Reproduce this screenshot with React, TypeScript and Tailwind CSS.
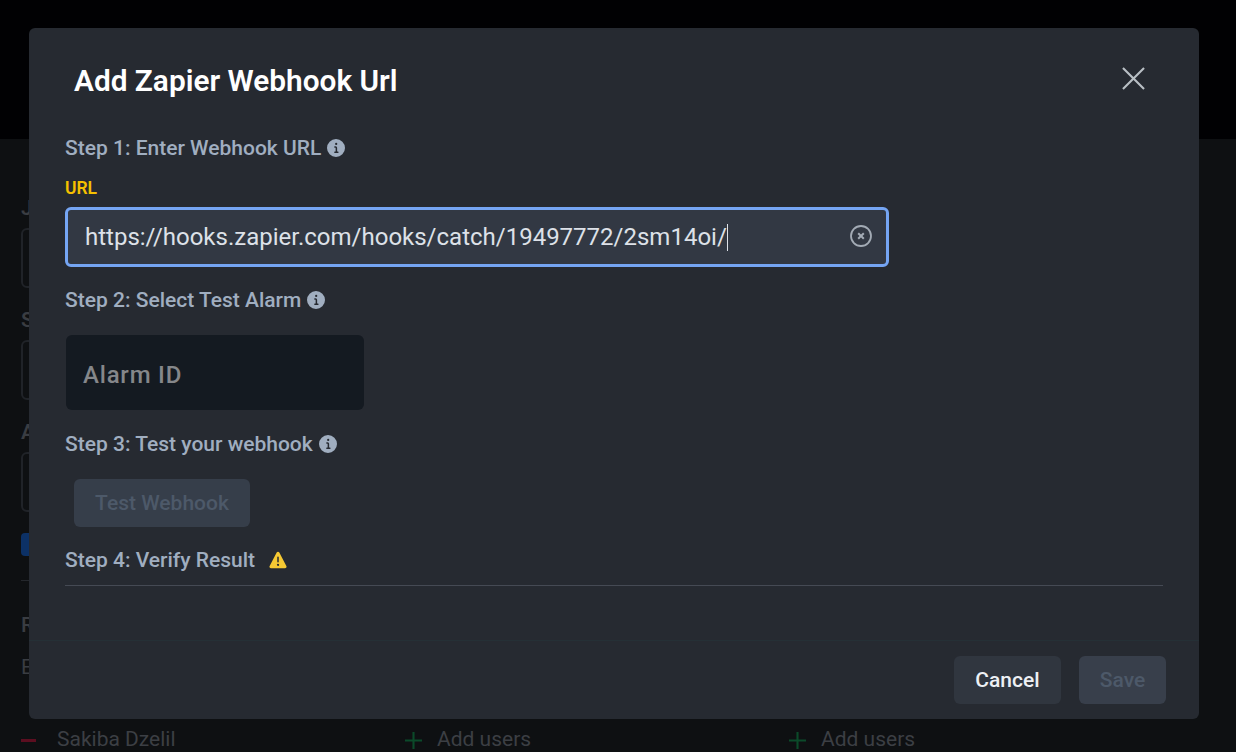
const INFO = "M12,0A12,12,0,1,0,24,12,12.013,12.013,0,0,0,12,0Zm.25,5a1.5,1.5,0,1,1-1.5,1.5A1.5,1.5,0,0,1,12.25,5ZM14.5,18.5h-4a1,1,0,0,1,0-2h.75a.25.25,0,0,0,.25-.25v-4.5a.25.25,0,0,0-.25-.25H10.5a1,1,0,0,1,0-2h1a2,2,0,0,1,2,2v4.75a.25.25,0,0,0,.25.25h.75a1,1,0,1,1,0,2Z";
const WARN = "M23.119,20,13.772,2.15h0a2,2,0,0,0-3.543,0L.881,20a2,2,0,0,0,1.772,2.928H21.347A2,2,0,0,0,23.119,20ZM11,8.423a1,1,0,0,1,2,0v6a1,1,0,1,1-2,0Zm1.05,11.51h-.028a1.528,1.528,0,0,1-1.522-1.47A1.476,1.476,0,0,1,11.948,16.9h.028A1.527,1.527,0,0,1,13.5,18.371,1.475,1.475,0,0,1,12.05,19.933Z";

function Info() {
  return (
    <svg viewBox="0 0 24 24" className="w-[18px] h-[18px] ml-[6px] shrink-0 text-[#a0aec0]" fill="currentColor">
      <path d={INFO} />
    </svg>
  );
}

function Step({ children }: { children: React.ReactNode }) {
  return (
    <div className="flex items-center h-[24px] text-[21px] leading-[24px] font-medium text-[#a0aec0]">
      {children}
    </div>
  );
}

function BgField({ letter, mt }: { letter: string; mt: string }) {
  return (
    <div className={mt}>
      <div className="text-[21px] leading-[24px] font-semibold text-[#3a3d42]">{letter}</div>
      <div className="mt-[8px] h-[60px] w-[200px] rounded-[6px] border-2 border-[#202328]" />
    </div>
  );
}

export default function App() {
  return (
    <div className="relative w-[1236px] h-[752px] overflow-hidden bg-[#0e1012] font-['Roboto',sans-serif]">
      <div className="h-[139px] bg-[#010103]" />
      <div className="pl-[21px]">
        <BgField letter="J" mt="mt-[57px]" />
        <BgField letter="S" mt="mt-[20px]" />
        <BgField letter="A" mt="mt-[20px]" />
        <div className="mt-[21px] w-[24px] h-[23px] rounded-[4px] bg-[#0c3166]" />
        <div className="mt-[24px] h-px w-[200px] bg-[#24272c]" />
        <div className="mt-[32px] text-[21px] leading-[24px] font-medium text-[#3a3d42]">R</div>
        <div className="mt-[18px] text-[21px] leading-[24px] text-[#3a3d42]">E</div>
        <div className="mt-[49px] flex items-center h-[24px] text-[21px] text-[#3c3f44]">
          <div className="w-[15px] h-[3px] bg-[#5c0e20]" />
          <span className="ml-[21px] w-[348px]">Sakiba Dzelil</span>
          <svg viewBox="0 0 16 16" className="w-[17px] h-[17px] text-[#0b4a2a]" fill="none" stroke="currentColor" strokeWidth="2">
            <path d="M8 0v16M0 8h16" />
          </svg>
          <span className="ml-[15px] w-[352px]">Add users</span>
          <svg viewBox="0 0 16 16" className="w-[17px] h-[17px] text-[#0b4a2a]" fill="none" stroke="currentColor" strokeWidth="2">
            <path d="M8 0v16M0 8h16" />
          </svg>
          <span className="ml-[15px]">Add users</span>
        </div>
      </div>

      <div className="absolute left-[29px] top-[28px] w-[1170px] h-[691px] flex flex-col rounded-[6px] bg-[#262a31]">
        <div className="h-[108px] flex items-start justify-between pl-[45px] pr-[54px]">
          <h2 className="mt-[33px] text-[29.8px] leading-[40px] font-semibold text-white">Add Zapier Webhook Url</h2>
          <svg viewBox="0 0 24 24" className="mt-[39px] w-[23px] h-[23px] text-[#b8bfc4]" fill="none" stroke="currentColor" strokeWidth="2.2">
            <path d="M1 1l22 22M23 1L1 23" />
          </svg>
        </div>

        <div className="px-[36px]">
          <Step>
            Step 1: Enter Webhook URL
            <Info />
          </Step>
          <div className="mt-[16px] text-[17.5px] leading-[24px] font-semibold text-[#f5c000]">URL</div>
          <div className="mt-[7px] w-[824px] h-[60px] flex items-center justify-between rounded-[6px] border-[3px] border-[#75a5f3] bg-[#323843] pl-[17px] pr-[13px]">
            <div className="flex items-center text-[24px] text-[#dde1e8]">
              <span>https://hooks.zapier.com/hooks/catch/19497772/2sm14oi/</span>
              <span className="w-px h-[27px] bg-[#dde1e8]" />
            </div>
            <svg viewBox="0 0 24 24" className="w-[24px] h-[24px] -translate-y-px text-[#a3abb5]" fill="none" stroke="currentColor">
              <circle cx="12" cy="12" r="10" strokeWidth="1.8" />
              <path d="M9.2 9.2l5.6 5.6M14.8 9.2l-5.6 5.6" strokeWidth="2" />
            </svg>
          </div>

          <div className="mt-[21px]">
            <Step>
              Step 2: Select Test Alarm
              <Info />
            </Step>
          </div>
          <div className="mt-[23px] ml-px w-[298px] h-[75px] flex items-center rounded-[6px] bg-[#141a21] pl-[17px] pt-[4px] text-[24px] font-medium tracking-[0.8px] text-[#85878a]">
            Alarm ID
          </div>

          <div className="mt-[22px]">
            <Step>
              Step 3: Test your webhook
              <Info />
            </Step>
          </div>
          <div className="mt-[23px] ml-[9px] w-[176px] h-[48px] flex items-center justify-center rounded-[6px] bg-[#363e4a] pt-[2px] text-[21px] font-medium text-[#4d5969]">
            Test Webhook
          </div>

          <div className="mt-[21px]">
            <Step>
              Step 4: Verify Result
              <svg viewBox="0 0 24 24" className="ml-[14px] w-[18px] h-[18px] text-[#f6c933]" fill="currentColor">
                <path d={WARN} />
              </svg>
            </Step>
          </div>
          <div className="mt-[13px] h-px bg-[#454a54]" />
        </div>

        <div className="mt-auto h-[79px] border-t border-[#253036] pt-[15px] pr-[33px] flex justify-end gap-[18px]">
          <div className="w-[107px] h-[48px] flex items-center justify-center rounded-[6px] bg-[#30363f] pt-[2px] text-[21px] font-medium text-[#edf0f4]">
            Cancel
          </div>
          <div className="w-[87px] h-[48px] flex items-center justify-center rounded-[6px] bg-[#383f4b] pt-[2px] text-[21px] font-medium text-[#4d5969]">
            Save
          </div>
        </div>
      </div>
    </div>
  );
}
